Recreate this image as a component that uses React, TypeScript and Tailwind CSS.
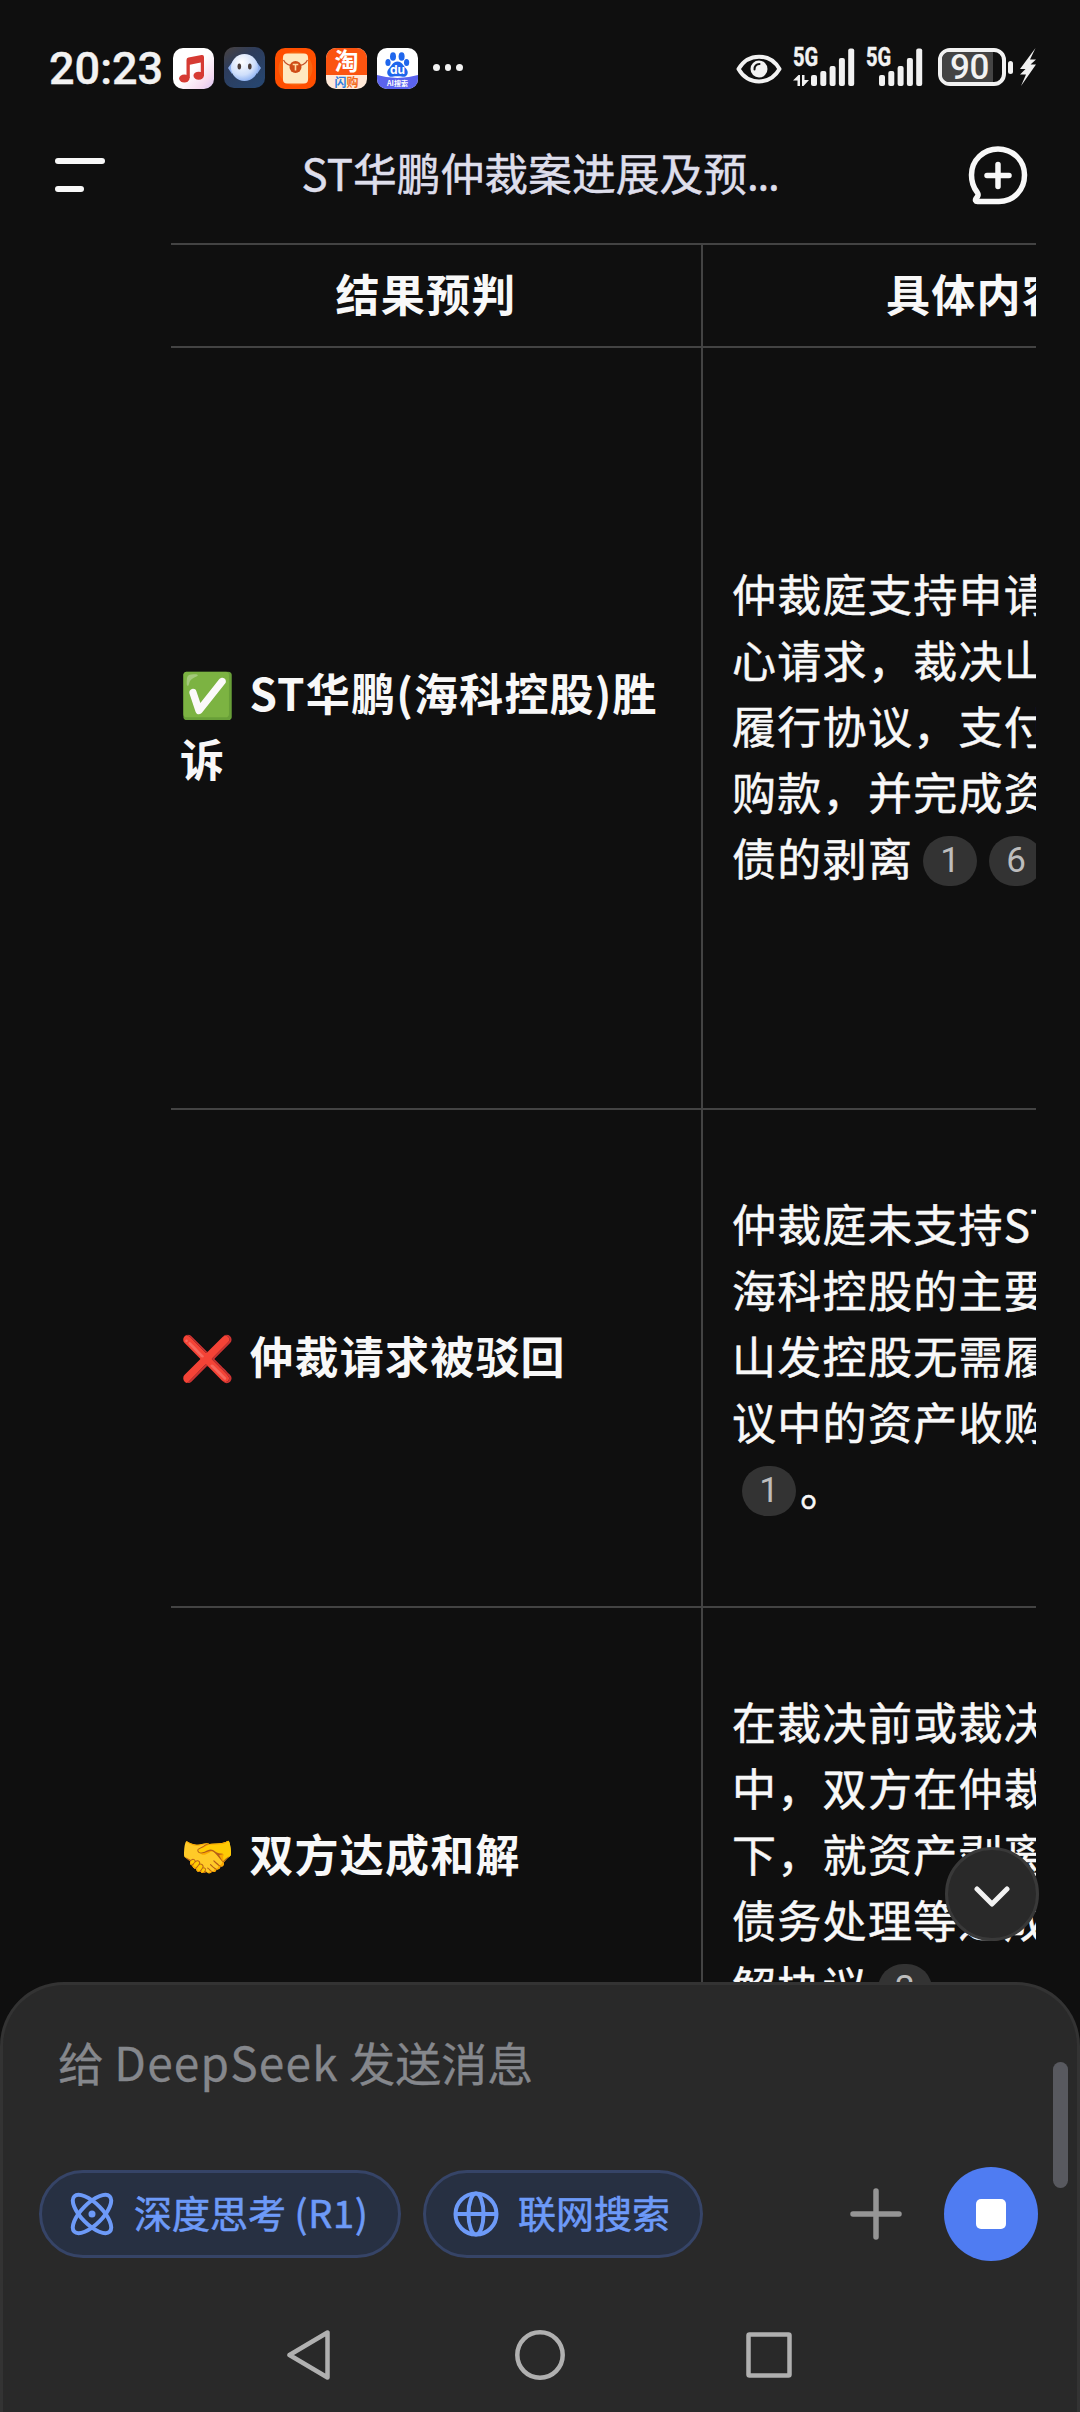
import type { ReactNode } from 'react';

interface TableRow {
  id: string;
  emoji: string;
  label: string[];
  height: string;
  content: ReactNode;
}

function Cite({ n }: { n: number }) {
  return (
    <span className="ml-[10px] mr-[2px] mt-[7px] inline-flex h-[50px] w-[54px] items-center justify-center rounded-full bg-[#333333] pb-[1px] font-['Roboto'] text-[35px] leading-none tracking-normal text-[#bdbdbd] [-webkit-text-stroke:0px]">
      {n}
    </span>
  );
}

const rows: TableRow[] = [
  {
    id: 'win',
    emoji: '✅',
    label: ['ST华鹏(海科控股)胜', '诉'],
    height: 'h-[762px]',
    content: (
      <>
        <p>仲裁庭支持申请</p>
        <p>心请求，裁决山</p>
        <p>履行协议，支付</p>
        <p>购款，并完成资</p>
        <p className="flex items-center">
          债的剥离
          <Cite n={1} />
          <Cite n={6} />
        </p>
      </>
    ),
  },
  {
    id: 'rejected',
    emoji: '❌',
    label: ['仲裁请求被驳回'],
    height: 'h-[498px]',
    content: (
      <>
        <p>仲裁庭未支持ST</p>
        <p>海科控股的主要</p>
        <p>山发控股无需履</p>
        <p>议中的资产收购</p>
        <p className="flex items-center">
          <Cite n={1} />
          <span className="ml-[2px]">。</span>
        </p>
      </>
    ),
  },
  {
    id: 'settled',
    emoji: '🤝',
    label: ['双方达成和解'],
    height: 'h-[498px]',
    content: (
      <>
        <p>在裁决前或裁决</p>
        <p>中，双方在仲裁</p>
        <p>下，就资产剥离</p>
        <p>债务处理等达成</p>
        <p className="flex items-center">
          解协议
          <Cite n={2} />
        </p>
      </>
    ),
  },
];

function MusicIcon() {
  return (
    <svg viewBox="0 0 41 41" className="size-[41px]">
      <defs>
        <linearGradient id="music" x1="0" y1="0" x2="1" y2="1">
          <stop offset="0.5" stopColor="#ffffff" />
          <stop offset="0.8" stopColor="#f6dcf0" />
          <stop offset="1" stopColor="#d9c4f2" />
        </linearGradient>
      </defs>
      <rect width="41" height="41" rx="10" fill="url(#music)" />
      <path d="M13.5 12 Q13.5 10 15.500 9.600 L28.500 7 Q31 6.600 31 9 V28 H27.8 V14.5 L16.8 16.8 V30 H13.5 Z" fill="#d63a33" />
      <ellipse cx="11.3" cy="30.5" rx="5.2" ry="4" fill="#d63a33" />
      <ellipse cx="25.7" cy="27.7" rx="5.2" ry="4" fill="#d63a33" />
    </svg>
  );
}

function RobotIcon() {
  return (
    <svg viewBox="0 0 41 41" className="mt-[-1px] size-[41px]">
      <defs>
        <linearGradient id="robot" x1="0" y1="0" x2="0.7" y2="1">
          <stop offset="0" stopColor="#4a4340" />
          <stop offset="0.4" stopColor="#2d3c5b" />
          <stop offset="1" stopColor="#27456e" />
        </linearGradient>
        <radialGradient id="robotHead" cx="0.4" cy="0.3" r="0.8">
          <stop offset="0" stopColor="#ffffff" />
          <stop offset="0.6" stopColor="#cfdffb" />
          <stop offset="1" stopColor="#7ba5f0" />
        </radialGradient>
      </defs>
      <rect width="41" height="41" rx="10" fill="url(#robot)" />
      <path d="M9 14 L4 21 L8 27 Z M32 14 L37 21 L33 27 Z" fill="#8fb0ee" />
      <circle cx="20.5" cy="20.5" r="13.5" fill="url(#robotHead)" />
      <ellipse cx="15.3" cy="19.5" rx="1.8" ry="3" fill="#4a3d3a" />
      <ellipse cx="25.8" cy="19.5" rx="1.8" ry="3" fill="#4a3d3a" />
    </svg>
  );
}

function RedPacketIcon() {
  return (
    <svg viewBox="0 0 41 41" className="size-[41px]">
      <rect width="41" height="41" rx="10" fill="#ff4f00" />
      <circle cx="20.5" cy="20.5" r="17" fill="#f96410" />
      <rect x="8" y="5.5" width="25" height="30" rx="4" fill="#ffe9c0" />
      <path d="M8.5 12 C12 20 29 20 32.500 12" fill="none" stroke="#c4512a" strokeWidth="1.2" />
      <circle cx="20.5" cy="19" r="6" fill="#cf4c17" />
      <path d="M17.700 16.500 H23.300 M20.500 16.500 V22.500" stroke="#ffd9a0" strokeWidth="1.6" fill="none" />
    </svg>
  );
}

function TaobaoIcon() {
  return (
    <div className="flex size-[41px] flex-col items-center rounded-[10px] bg-[#ffe9d8]">
      <div className="flex h-[27px] w-full items-center justify-center rounded-t-[10px] bg-[#fb5410] pb-[3px] text-[24px] font-bold leading-[24px] text-white">
        淘
      </div>
      <div className="flex h-[14px] items-center pb-[1px] text-[12px] font-bold leading-[13px] text-[#f26a1b]">
        <span className="text-[#2f7fe0]">闪</span>购
      </div>
    </div>
  );
}

function BaiduIcon() {
  return (
    <div className="relative size-[41px] overflow-hidden rounded-[10px] bg-white">
      <svg viewBox="0 0 41 41" className="size-[41px]">
        <path d="M0 27 Q20.500 33 41 27 V41 H0 Z" fill="#5b63ee" />
        <g fill="#1f66ec">
          <ellipse cx="16" cy="8.5" rx="3" ry="4.300" />
          <ellipse cx="24.600" cy="8.500" rx="3" ry="4.300" />
          <ellipse cx="11" cy="14.500" rx="2.600" ry="3.500" />
          <ellipse cx="29.600" cy="14.500" rx="2.600" ry="3.500" />
          <path d="M20.500 13.500 C25 13.500 26.500 18 29 20.500 C33 25 29.500 29.500 25.500 28.800 C22 28.200 19 28.200 15.500 28.800 C11.500 29.500 8 25 12 20.500 C14.500 18 16 13.500 20.500 13.500 Z" />
        </g>
      </svg>
      <span className="absolute inset-x-0 top-[15px] text-center font-['Inter'] text-[12px] font-bold leading-[14px] text-white">du</span>
      <span className="absolute inset-x-0 top-[31px] whitespace-nowrap text-center text-[7px] font-bold leading-[8px] text-white">
        AI搜索
      </span>
    </div>
  );
}

function Signal({ data }: { data?: boolean }) {
  return (
    <div className="relative h-[38px] w-[62px]">
      <span className="absolute left-0 top-0 origin-left scale-x-[0.8] font-['Roboto'] text-[25px] font-bold leading-[20px] text-[#f2f2f2] [-webkit-text-stroke:0.5px]">
        5G
      </span>
      <svg viewBox="0 0 62 38" className={data ? 'h-[38px] w-[62px]' : 'ml-[-5px] h-[38px] w-[62px]'}>
        <g fill="#f2f2f2">
          <rect x="18" y="27" width="6" height="11" rx="2" />
          <rect x="27.300" y="23" width="6" height="15" rx="2" />
          <rect x="36.600" y="18" width="6" height="20" rx="2" />
          <rect x="45.900" y="10" width="6" height="28" rx="2" />
          <rect x="55.200" y="0.500" width="6" height="37.500" rx="2" />
          {data && <path d="M0 32.500 L5.500 27 H7 V38 H4.500 V32.500 Z M9 27 H11.500 V32 H16 L10.500 38 H9 Z" />}
        </g>
      </svg>
    </div>
  );
}

function StatusBar() {
  return (
    <div className="flex h-[110px] shrink-0 items-start pl-[49px] pr-[44px] pt-[48px]">
      <span className="w-[124px] font-['Roboto'] text-[45px] font-medium leading-[41px] text-[#f2f2f2] [-webkit-text-stroke:0.4px]">20:23</span>
      <div className="flex gap-[10px]">
        <MusicIcon />
        <RobotIcon />
        <RedPacketIcon />
        <TaobaoIcon />
        <BaiduIcon />
      </div>
      <div className="ml-[15px] mt-[16px] flex gap-[5px]">
        <i className="size-[6.5px] rounded-full bg-[#f2f2f2]" />
        <i className="size-[6.5px] rounded-full bg-[#f2f2f2]" />
        <i className="size-[6.5px] rounded-full bg-[#f2f2f2]" />
      </div>
      <div className="ml-auto flex">
        <svg viewBox="0 0 46 30" className="mr-[11px] mt-[6px] h-[30px] w-[46px]">
          <path d="M2.500 15 C12 -1.500 34 -1.500 43.500 15 C34 31.500 12 31.500 2.500 15 Z" fill="none" stroke="#f2f2f2" strokeWidth="4" strokeLinejoin="round" />
          <circle cx="23" cy="15" r="8.500" fill="#f2f2f2" />
          <path d="M18.500 15.500 C18.500 12 20.500 10 23.500 10" fill="none" stroke="#0f0f0f" strokeWidth="2" strokeLinecap="round" />
        </svg>
        <Signal data />
        <div className="w-[11px]" />
        <Signal />
        <div className="ml-[10px] flex h-[38px] w-[68px] rounded-[12px] border-4 border-[#f2f2f2]">
          <div className="flex h-full w-[51px] items-center justify-center rounded-l-[7px] bg-[#444444] pl-[4px] pt-[2px] font-['Roboto'] text-[35px] font-medium leading-[28px] tracking-[-0.5px] text-[#f2f2f2]">
            90
          </div>
        </div>
        <div className="ml-[2px] mt-[13px] h-[13px] w-[5px] rounded-full bg-[#f2f2f2]" />
        <svg viewBox="0 0 16 38" className="ml-[7px] h-[38px] w-[16px]">
          <path d="M15.500 0 L0 21 H5.500 L0 26.500 H6 L1 38 L16 16.500 H10.500 L16 11.500 H10 Z" fill="#f2f2f2" />
        </svg>
      </div>
    </div>
  );
}

function Header() {
  return (
    <header className="flex h-[133px] shrink-0 items-start justify-between pl-[55px] pr-[52px]">
      <div className="mt-[48px] flex w-[57px] flex-col gap-[22px]">
        <div className="h-[6px] w-[50px] rounded-sm bg-[#f8f8f8]" />
        <div className="h-[6px] w-[29px] rounded-sm bg-[#f8f8f8]" />
      </div>
      <h1 className="mt-[29px] whitespace-nowrap text-[43.8px] leading-[66px] text-[#dedeeb] [-webkit-text-stroke:0.5px]">
        ST华鹏仲裁案进展及预<span className="font-['Noto_Sans'] tracking-[-1.3px]">...</span>
      </h1>
      <svg viewBox="0 0 60 60" className="mt-[35px] size-[60px]" fill="none" stroke="#f8f8f8" strokeWidth="5.5" strokeLinecap="round" strokeLinejoin="round">
        <path d="M30 4 C44.500 4 56.500 15 56.500 30 C56.500 45 45.500 56.500 31 56.500 H9.500 C7.500 56.500 7 55 8 53.500 C10 51 11 50 9 47 C5.500 42.500 3.500 37 3.500 30 C3.500 15 15.500 4 30 4 Z" />
        <path d="M30 19.500 V41.500 M19 30.500 H41" />
      </svg>
    </header>
  );
}

function ResultTable() {
  return (
    <div className="ml-[171px] w-[865px] overflow-hidden">
      {/* table is scrolled sideways, so the first column starts left of the clip */}
      <div className="ml-[-23px] w-[1104px] border-t-2 border-[#434343] text-[44px] leading-[66px] tracking-[1.3px] text-[#f8f8f8]">
        <div className="flex h-[103px] border-b-2 border-[#434343] font-bold">
          <div className="flex w-[555px] items-center justify-center border-r-2 border-[#434343] pb-[5px] pl-[3px]">结果预判</div>
          <div className="flex w-[549px] items-center justify-center pb-[5px] pr-[2px]">具体内容</div>
        </div>
        {rows.map((row) => (
          <div key={row.id} className={`flex border-b-2 border-[#434343] ${row.height}`}>
            <div className="flex w-[555px] flex-col justify-center whitespace-nowrap border-r-2 border-[#434343] pb-[6px] pl-[32px] font-bold tracking-[1.2px]">
              <p>
                <span className="mr-[2px]">{row.emoji}</span> {row.label[0]}
              </p>
              {row.label[1] && <p>{row.label[1]}</p>}
            </div>
            <div className="flex w-[549px] flex-col justify-center whitespace-nowrap pb-[6px] pl-[29px] [-webkit-text-stroke:0.5px]">{row.content}</div>
          </div>
        ))}
      </div>
    </div>
  );
}

function NavBar() {
  return (
    <div className="mt-auto flex h-[114px] items-center justify-center gap-[181px] text-[#b0b0b0]">
      <svg viewBox="0 0 50 50" className="size-[50px]" fill="none" stroke="currentColor" strokeWidth="4.5" strokeLinejoin="round">
        <path d="M5.500 25 L43.500 2.500 V47.500 Z" />
      </svg>
      <svg viewBox="0 0 50 50" className="size-[50px]" fill="none" stroke="currentColor" strokeWidth="4.5">
        <circle cx="25" cy="25" r="22.700" />
      </svg>
      <svg viewBox="0 0 50 50" className="size-[50px]" fill="none" stroke="currentColor" strokeWidth="4.5" strokeLinejoin="round">
        <rect x="2.500" y="4.500" width="41" height="41" rx="1" />
      </svg>
    </div>
  );
}

function Composer() {
  return (
    <div className="relative flex h-[430px] shrink-0 flex-col rounded-t-[64px] border-x-3 border-t-3 border-[#333333] bg-[#292929]">
      <div className="ml-[55px] mt-[43px] text-[46px] leading-[66px] text-[#85878c] [-webkit-text-stroke:0.3px]">
        给 <span className="tracking-[1.2px]">DeepSeek</span> 发送消息
      </div>
      <div className="absolute right-[9px] top-[77px] h-[126px] w-[15px] rounded-full bg-[#58595f]" />
      <div className="mt-[73px] flex h-[94px] items-center pl-[36px] pr-[39px] text-[38px] text-[#6d9af8] [-webkit-text-stroke:0.6px]">
        <div className="flex h-[88px] w-[362px] items-center rounded-full border-3 border-[#364467] bg-[#273042] pl-[28px]">
          <svg viewBox="0 0 44 44" className="mr-[20px] size-[44px]" fill="none" stroke="currentColor" strokeWidth="4">
            <ellipse cx="22" cy="22" rx="25" ry="10.500" transform="rotate(45 22 22)" />
            <ellipse cx="22" cy="22" rx="25" ry="10.500" transform="rotate(-45 22 22)" />
            <circle cx="22" cy="22" r="3.500" fill="currentColor" stroke="none" />
          </svg>
          <span className="whitespace-nowrap pb-[5px]">
            深度思考 <span className="tracking-[0.8px]">(R1)</span>
          </span>
        </div>
        <div className="ml-[22px] flex h-[88px] w-[280px] items-center rounded-full border-3 border-[#364467] bg-[#273042] pl-[27px]">
          <svg viewBox="0 0 46 46" className="mr-[19px] size-[46px]" fill="none" stroke="currentColor" strokeWidth="4">
            <circle cx="23" cy="23" r="20.500" />
            <ellipse cx="23" cy="23" rx="7.500" ry="20.500" />
            <path d="M3 23 H43" />
          </svg>
          <span className="whitespace-nowrap pb-[5px]">联网搜索</span>
        </div>
        <svg viewBox="0 0 52 52" className="ml-auto mr-[42px] size-[52px]" stroke="#959595" strokeWidth="5.5" strokeLinecap="round">
          <path d="M26 3 V49 M3 26 H49" />
        </svg>
        <div className="flex size-[94px] items-center justify-center rounded-full bg-[#4f7cf2]">
          <div className="size-[30px] rounded-[5px] bg-white" />
        </div>
      </div>
      {/* jump to latest */}
      <div className="absolute right-[38px] top-[-138px] flex size-[94px] items-center justify-center rounded-full border-3 border-[#393939] bg-[#292929]">
        <svg viewBox="0 0 36 22" className="mt-[6px] h-[22px] w-[36px]" fill="none" stroke="#f2f2f2" strokeWidth="5" strokeLinecap="round" strokeLinejoin="round">
          <path d="M3 3 L18 18 L33 3" />
        </svg>
      </div>
      <NavBar />
    </div>
  );
}

export default function App() {
  return (
    <div className="flex h-[2412px] w-[1080px] flex-col overflow-hidden bg-[#0f0f0f] font-['Noto_Sans_CJK_SC',sans-serif]">
      <StatusBar />
      <Header />
      <main className="min-h-0 flex-1 overflow-hidden">
        <ResultTable />
      </main>
      <Composer />
    </div>
  );
}
